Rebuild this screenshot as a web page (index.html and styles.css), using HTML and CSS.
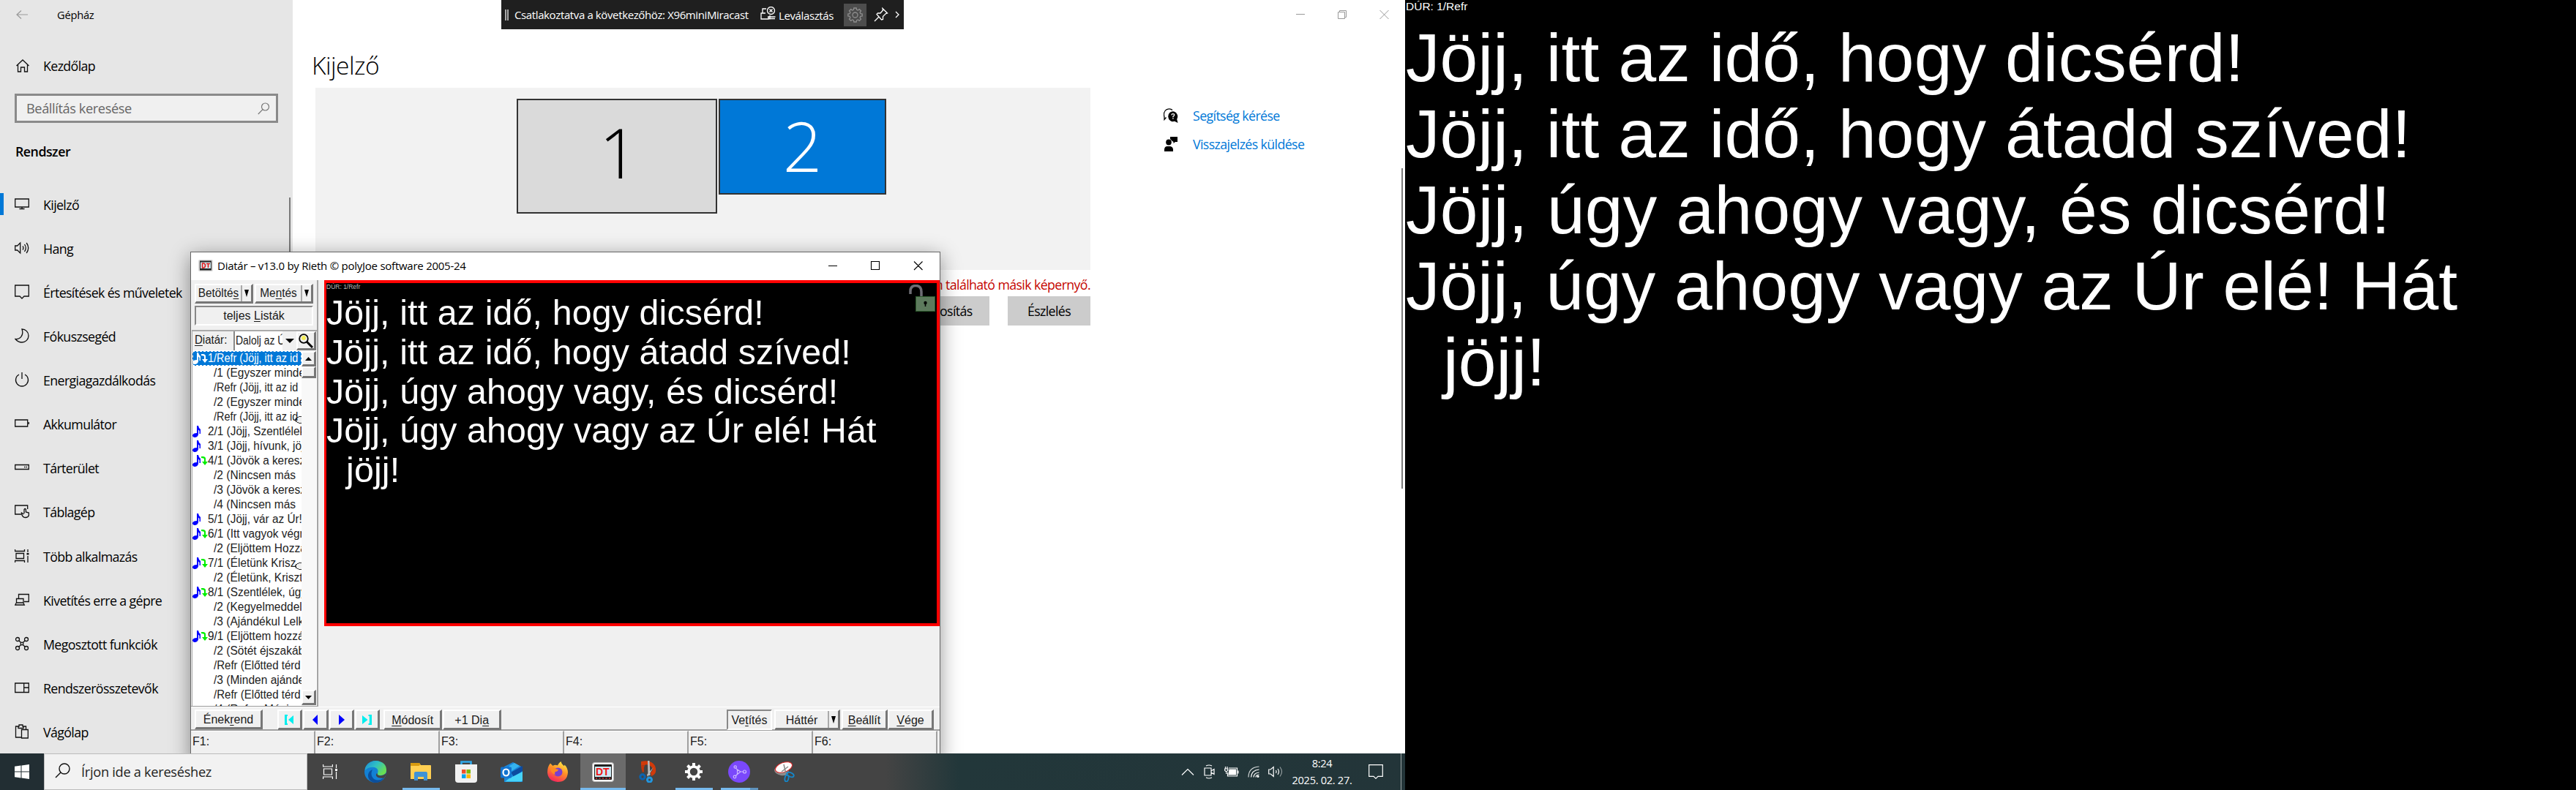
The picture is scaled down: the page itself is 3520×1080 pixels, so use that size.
FILE: index.html
```html
<!DOCTYPE html>
<html lang="hu">
<head>
<meta charset="utf-8">
<title>Gépház – Kijelző</title>
<link rel="stylesheet" href="styles.css">
</head>
<body>
<div class="screens">
<div class="desktop">

  <div class="settings">
    <aside class="sidebar">
      <header class="app-head">
        <svg class="back" width="16" height="12" viewBox="0 0 16 12"><path d="M7 .5 1 6l6 5.500M1 6h15"/></svg>
        <span class="seg small">Gépház</span>
      </header>
      <div class="home">
        <svg class="ico" width="20" height="20" viewBox="0 0 20 20"><path d="M1.500 10 10 2l8.500 8M3.500 8.500V18h4v-6h5v6h4V8.500"/></svg>
        <span class="seg">Kezdőlap</span>
      </div>
      <div class="search">
        <span class="seg">Beállítás keresése</span>
        <svg width="17" height="17" viewBox="0 0 17 17"><circle cx="10.500" cy="6" r="5"/><path d="M7 9.700.8 16"/></svg>
      </div>
      <h2 class="seg">Rendszer</h2>
      <nav>
        <div class="nav-item on"><svg class="ico" viewBox="0 0 20 20"><path d="M.7 3h18.600v11H.7zM10 14v3M6.500 16.500h7"/></svg><span class="seg">Kijelző</span></div>
        <div class="nav-item"><svg class="ico" viewBox="0 0 20 20"><path d="M.7 7h3l4-4v14l-4-4h-3zM11 7.500q1.800 2.500 0 5M13.500 5q3.500 5 0 10M16.200 3q5 7 0 14"/></svg><span class="seg">Hang</span></div>
        <div class="nav-item"><svg class="ico" viewBox="0 0 20 20"><path d="M.7 1h18.600v15H13l-3 3-3-3H.7z"/></svg><span class="seg">Értesítések és műveletek</span></div>
        <div class="nav-item"><svg class="ico" viewBox="0 0 20 20"><path d="M10 1c5 0 9 4 9 9s-4 9-9 9c-4 0-7-2-9-4.500C7 15 13 10 10 1z"/></svg><span class="seg">Fókuszsegéd</span></div>
        <div class="nav-item"><svg class="ico" viewBox="0 0 20 20"><path d="M10 0v9M6 3a8.500 8.500 0 1 0 8 0"/></svg><span class="seg">Energiagazdálkodás</span></div>
        <div class="nav-item"><svg class="ico" viewBox="0 0 20 20"><path d="M.7 5h17v9h-17zM19.300 8v3"/></svg><span class="seg">Akkumulátor</span></div>
        <div class="nav-item"><svg class="ico" viewBox="0 0 20 20"><path d="M.7 6.500h18.600v6H.7zM13 9.500h1.500M15.500 9.500H17"/></svg><span class="seg">Tárterület</span></div>
        <div class="nav-item"><svg class="ico" viewBox="0 0 20 20"><path d="M9 14H.7V2h17v5M13 13V7.500q1.200-2 2.400 0V11l4 1v3.500q-1 3-4.500 3T10 15l-.5-3 3 2"/></svg><span class="seg">Táblagép</span></div>
        <div class="nav-item"><svg class="ico" viewBox="0 0 20 20"><path d="M.5 1v2.500H13.500V1M.5 19v-2.500H13.500V19M2 6.500h10.500v7H2zM18 1v4M18 10v9"/><path d="M16.500 6h3v2.500h-3z" fill="#111" stroke="none"/></svg><span class="seg">Több alkalmazás</span></div>
        <div class="nav-item"><svg class="ico" viewBox="0 0 20 20"><path d="M5.500 8V2.500h13.800v10H13M2.500 8.500h9.500V14H2.500zM2 14.500l-1.200 2.500h12.500l-1.300-2.500"/></svg><span class="seg">Kivetítés erre a gépre</span></div>
        <div class="nav-item"><svg class="ico" viewBox="0 0 20 20"><circle cx="4" cy="4" r="2.500"/><circle cx="16" cy="4" r="2.500"/><circle cx="4" cy="16" r="2.500"/><circle cx="16" cy="16" r="2.500"/><circle cx="10" cy="10" r="1.800"/><path d="m5.800 5.800 3 3m2.400 2.400 3 3m0-8.400-3 3m-2.400 2.400-3 3"/></svg><span class="seg">Megosztott funkciók</span></div>
        <div class="nav-item"><svg class="ico" viewBox="0 0 20 20"><path d="M.7 4h18.600v12.500H.7zM12.700 4v12.500M12.700 10h6.500"/></svg><span class="seg">Rendszerösszetevők</span></div>
        <div class="nav-item"><svg class="ico" viewBox="0 0 20 20"><path d="M9 18H1.500V3H6V1h5v2h4.500v4M5 3v2.500h7V3M9.500 7.500h8.800V19H9.500z"/></svg><span class="seg">Vágólap</span></div>
      </nav>
      <i class="side-scroll"></i>
    </aside>

    <main class="content">
      <div class="win-buttons">
        <svg width="12" height="12" viewBox="0 0 12 12"><path d="M0 5.500h12"/></svg>
        <svg width="12" height="12" viewBox="0 0 12 12"><path d="M.5 2.500h9v9h-9zM2.500 2.500v-2h9v9h-2"/></svg>
        <svg width="13" height="12" viewBox="0 0 13 12"><path d="m.5 0 12 12m0-12-12 12"/></svg>
      </div>
      <h1 class="seg">Kijelző</h1>
      <div class="columns">
        <section class="display-col">
          <div class="arrange">
            <div class="monitor one"><span class="seg">1</span></div>
            <div class="monitor two"><span class="seg">2</span></div>
          </div>
          <p class="warn"><span class="seg">Nem található másik képernyő.</span></p>
          <div class="actions">
            <div class="btn wide"><span class="seg">Azonosítás</span></div>
            <div class="btn"><span class="seg">Észlelés</span></div>
          </div>
        </section>
        <section class="help">
          <div class="help-row">
            <svg width="20" height="20" viewBox="0 0 20 20"><path d="M3.500 12.500 1 15.500V12Q-1 5 4 1.800 9-.5 12 2.500" fill="none" stroke="#000" stroke-width="1.300"/><path d="M19.500 20 15 17.800A6.500 7 0 1 1 18.200 15z"/><path d="M10.900 9.300q.2-1.800 2-1.700T14.600 9.300q0 1-1.700 2v1m0 1v1.500" stroke="#fff" stroke-width="1.400" fill="none"/></svg>
            <span class="seg">Segítség kérése</span>
          </div>
          <div class="help-row">
            <svg width="20" height="20" viewBox="0 0 20 20"><ellipse cx="7" cy="7.500" rx="3.800" ry="4"/><path d="M1 20v-3q.5-4 4-4h4q3.500.5 4 4v3zM9 0h10v7h-3l-2.500 2V7L12 6 9 3z"/></svg>
            <span class="seg">Visszajelzés küldése</span>
          </div>
        </section>
      </div>
      <i class="main-scroll"></i>
    </main>
  </div>

  <div class="miracast">
    <i class="grip"></i>
    <span class="seg m-text">Csatlakoztatva a következőhöz: X96miniMiracast</span>
    <svg class="m-disc" width="21" height="18" viewBox="0 0 21 18"><path d="M8 3H3v6M7 9H1v8h10v-3M10 14h10.500M13 12v5.500M11 16.500h9"/><circle cx="14.500" cy="5.500" r="5"/><path d="m12.500 3.500 4 4m0-4-4 4"/></svg>
    <span class="seg m-btn">Leválasztás</span>
    <span class="m-gear"><svg width="21" height="21" viewBox="0 0 21 21"><path d="M8.800 1h3.400l.4 2.400 1.700.7 2-1.400 2.200 2.200-1.400 2 .7 1.700 2.400.4v3l-2.400.4-.7 1.700 1.400 2-2.200 2.200-2-1.400-1.700.7-.4 2.400H8.800l-.4-2.400-1.700-.7-2 1.400-2.200-2.200 1.400-2-.7-1.700L.8 12V9l2.400-.4.700-1.700-1.400-2 2.200-2.200 2 1.400 1.700-.7z"/><circle cx="10.500" cy="10.500" r="3.500"/></svg></span>
    <svg class="m-pin" width="20" height="20" viewBox="0 0 20 20"><path d="M12 1.500 18.500 8l-2 .5-4 4v4l-2 .5L4 9.500l1.500-1.500h3.500l3.500-4zM7 13l-6 6"/></svg>
    <svg class="m-chev" width="6" height="10" viewBox="0 0 6 10"><path d="m1 1 4 4-4 4"/></svg>
  </div>

  <div class="diatar">
    <div class="titlebar">
      <svg class="dt" width="20" height="16" viewBox="0 0 20 16"><rect width="20" height="16" rx="2" fill="#d8d8d8"/><rect x="2" y="1.500" width="16" height="13" fill="#222"/><rect x="3" y="3.500" width="14" height="8.500" fill="#d4eef5"/><path d="M5.500 5v6h2q2-.5 2-3t-2-3zM11 5.500h5M13.500 5.500V11" fill="none" stroke="#e02020" stroke-width="1.700"/></svg>
      <span class="seg">Diatár – v13.0 by Rieth © polyJoe software 2005-24</span>
      <svg class="controls" width="130" height="13" viewBox="0 0 130 13"><path d="M0 6.500h12M58.500.5h11v11h-11zM117 .5l11.500 11.500m0-11.500L117 12"/></svg>
    </div>
    <div class="body">
      <div class="panel">
        <div class="pair">
          <div class="b3 split"><span class="ms">Betölté<u>s</u></span><i class="arr"></i></div>
          <div class="b3 split"><span class="ms">Me<u>n</u>tés</span><i class="arr"></i></div>
        </div>
        <div class="b3 sunk lists"><span class="ms">teljes <u>L</u>isták</span></div>
        <div class="pick">
          <span class="ms"><u>D</u>iatár:</span>
          <div class="combo"><span class="ms">Dalolj az Ú</span></div>
          <div class="flat"><svg width="12" height="6"><path d="M0 0h12L6 6z"/></svg></div>
          <div class="b3 lens"><svg width="20" height="20" viewBox="0 0 20 20"><path d="m11 11 8 8" stroke="#000" stroke-width="3"/><circle cx="7" cy="7" r="5.800" fill="#eee" stroke="#000" stroke-width="1.800"/><circle cx="7" cy="6" r="3" fill="#f4ee58"/></svg></div>
        </div>
        <div class="list-wrap">
          <div class="list">
            <div class="row sel song link tight"><span class="ms">1/Refr (Jöjj, itt az id</span></div>
            <div class="row"><span class="ms">/1 (Egyszer minde</span></div>
            <div class="row tight"><span class="ms">/Refr (Jöjj, itt az id</span></div>
            <div class="row"><span class="ms">/2 (Egyszer minde</span></div>
            <div class="row more tight"><span class="ms">/Refr (Jöjj, itt az id</span></div>
            <div class="row song"><span class="ms">2/1 (Jöjj, Szentlélek</span></div>
            <div class="row song"><span class="ms">3/1 (Jöjj, hívunk, jöj</span></div>
            <div class="row song link"><span class="ms">4/1 (Jövök a keresz</span></div>
            <div class="row"><span class="ms">/2 (Nincsen más</span></div>
            <div class="row"><span class="ms">/3 (Jövök a keresz</span></div>
            <div class="row"><span class="ms">/4 (Nincsen más</span></div>
            <div class="row song"><span class="ms">5/1 (Jöjj, vár az Úr!</span></div>
            <div class="row song link"><span class="ms">6/1 (Itt vagyok végre</span></div>
            <div class="row"><span class="ms">/2 (Eljöttem Hozzá</span></div>
            <div class="row song link more"><span class="ms">7/1 (Életünk Krisz</span></div>
            <div class="row"><span class="ms">/2 (Életünk, Kriszt</span></div>
            <div class="row song link"><span class="ms">8/1 (Szentlélek, úgy</span></div>
            <div class="row"><span class="ms">/2 (Kegyelmeddel</span></div>
            <div class="row"><span class="ms">/3 (Ajándékul Lelk</span></div>
            <div class="row song link"><span class="ms">9/1 (Eljöttem hozzá</span></div>
            <div class="row"><span class="ms">/2 (Sötét éjszakáb</span></div>
            <div class="row refr"><span class="ms">/Refr (Előtted térd</span></div>
            <div class="row"><span class="ms">/3 (Minden ajánde</span></div>
            <div class="row refr"><span class="ms">/Refr (Előtted térd</span></div>
            <div class="row"><span class="ms">/4 (Refr – Mégis</span></div>
          </div>
          <div class="vbar">
            <div class="b3 sq"><svg width="9" height="5"><path d="M0 5h9L4.500 0z"/></svg></div>
            <div class="b3 thumb"></div>
            <div class="b3 sq last"><svg width="9" height="5"><path d="M0 0h9L4.500 5z"/></svg></div>
          </div>
        </div>
      </div>
      <div class="stage">
        <div class="preview">
          <div class="tag">DÚR: 1/Refr</div>
          <div class="lyrics">
            <div>Jöjj, itt az idő, hogy dicsérd!</div>
            <div>Jöjj, itt az idő, hogy átadd szíved!</div>
            <div>Jöjj, úgy ahogy vagy, és dicsérd!</div>
            <div>Jöjj, úgy ahogy vagy az Úr elé! Hát</div>
            <div class="wrap">jöjj!</div>
          </div>
          <svg class="lock" width="36" height="37" viewBox="0 0 36 37"><path d="M2 13V9q0-7.500 7.500-7.500T17 10v6" fill="none" stroke="#6d6d74" stroke-width="3.500"/><rect x="9.500" y="16.500" width="26" height="20" fill="#5d7a5d" stroke="#2c5a2c"/><circle cx="22.500" cy="25" r="2.200"/><path d="M21.700 25h1.600v5h-1.600z"/></svg>
        </div>
      </div>
    </div>
    <div class="toolbar">
      <div class="b3 t-enek"><span class="ms">Ének<u>r</u>end</span></div>
      <div class="nav-btns">
        <div class="b3"><svg width="13" height="14"><path d="M0 0h4v2H3v10h1v2H0zM12 1v12L5 7z" fill="#0ee"/></svg></div>
        <div class="b3"><svg width="13" height="14"><path d="M10 0v14L3 7z" fill="#00f"/></svg></div>
        <div class="b3"><svg width="13" height="14"><path d="M3 0v14l8-7z" fill="#00f"/></svg></div>
        <div class="b3"><svg width="13" height="14"><path d="M13 0H8.500v2h1.300v10H8.500v2H13zM0 1v12l7.500-6z" fill="#0ee"/></svg></div>
      </div>
      <div class="b3 t-mod"><span class="ms"><u>M</u>ódosít</span></div>
      <div class="b3 t-dia"><span class="ms">+1 Di<u>a</u></span></div>
      <div class="b3 sunk t-vet"><span class="ms">Ve<u>t</u>ítés</span></div>
      <div class="b3 split t-hat"><span class="ms">Háttér</span><i class="arr"></i></div>
      <div class="b3 t-be"><span class="ms"><u>B</u>eállít</span></div>
      <div class="b3 t-vege"><span class="ms"><u>V</u>ége</span></div>
    </div>
    <div class="fkeys">
      <span><b class="ms">F1:</b></span><span><b class="ms">F2:</b></span><span><b class="ms">F3:</b></span><span><b class="ms">F4:</b></span><span><b class="ms">F5:</b></span><span><b class="ms">F6:</b></span>
    </div>
  </div>

  <footer class="taskbar">
    <div class="start"><svg width="20" height="20" viewBox="0 0 20 20"><path d="M0 2.800 8.500 1.600v8H0zM9.500 1.500 20 0v9.600H9.500zM0 10.500h8.500v8L0 17.300zM9.500 10.500H20V20L9.500 18.600z" fill="#fff"/></svg></div>
    <div class="tsearch">
      <svg width="21" height="21" viewBox="0 0 21 21"><circle cx="13" cy="8" r="7"/><path d="M8 13 1 20"/></svg>
      <span class="seg">Írjon ide a kereséshez</span>
    </div>
    <div class="apps">
      <div class="app"><svg width="20" height="20" viewBox="0 0 20 20" fill="none" stroke="#fff" stroke-width="1.200"><path d="M.6 0v3h12.800V0M.6 20v-3h12.800v3M1.500 6h11v8h-11zM18.500 0v5M18.500 10v10"/><path d="M17 6h3v3h-3z" fill="#fff" stroke="none"/></svg></div>
      <div class="app"><svg width="30" height="30" viewBox="0 0 30 30">
        <defs><linearGradient id="e1" x1="0" y1="0" x2="1" y2=".6"><stop offset="0" stop-color="#1b8ad8"/><stop offset=".5" stop-color="#2fc0c4"/><stop offset="1" stop-color="#6be04f"/></linearGradient></defs>
        <circle cx="15" cy="15" r="15" fill="#1380d4"/>
        <path d="M1 10Q5 0 16 0q14 1.500 14 13 0 7-8 7-5 0-4-3 2-6-4-8-8-1-13 4z" fill="url(#e1)"/>
        <path d="M11 12q-4 8 2 13 7 4 14-2-5 8-14 7Q4 27 5 19q1-5 6-7z" fill="#0c4f9c"/>
        <path d="M17.500 17q-.5 3 4.500 3.500 5-.5 8-4 0 4-3 7-9 1-11-3-.5-3 1.500-3.500z" fill="#444"/></svg></div>
      <div class="app open"><svg width="28" height="24" viewBox="0 0 28 24"><path d="M0 1q0-1 1-1h11l2 3h13q1 0 1 1v18H0z" fill="#ffcf52"/><path d="M0 1q0-1 1-1h11l1.500 2-2 2H0z" fill="#d79a10"/><path d="M5 24V14q0-2 2-2h14q2 0 2 2v10h-5v-5h-8v5z" fill="#3f93d6"/></svg></div>
      <div class="app"><svg width="30" height="30" viewBox="0 0 30 30"><path d="M8.500 7V1.500h13V7" fill="none" stroke="#2fa9ea" stroke-width="2.600"/><path d="M0 5h30v21q0 4-4 4H4q-4 0-4-4z" fill="#f1f1f1"/><path d="M9 12h5.500v5.500H9z" fill="#f2502b"/><path d="M15.500 12H21v5.500h-5.500z" fill="#7fba00"/><path d="M9 18.500h5.500V24H9z" fill="#00a4ef"/><path d="M15.500 18.500H21V24h-5.500z" fill="#ffb900"/></svg></div>
      <div class="app"><svg width="30" height="27" viewBox="0 0 30 27"><path d="M5 6 17 0l13 7v20H5z" fill="#1a86d9"/><path d="M12 5 19 1l7 4-14 9z" fill="#35b3ef"/><path d="m14 14 16-9v7L18 20z" fill="#0c4aa0"/><path d="m12 22 18-9v11q0 2.500-2.500 2.500H6z" fill="#46d3f8"/><rect y="6.500" width="15" height="15" rx="1.500" fill="#1273d0"/><ellipse cx="7.500" cy="14" rx="4" ry="4.500" fill="none" stroke="#fff" stroke-width="2.200"/></svg></div>
      <div class="app"><svg width="28" height="28" viewBox="0 0 28 28">
        <defs><linearGradient id="f1" x1=".8" y1="0" x2=".3" y2="1"><stop offset="0" stop-color="#fff04a"/><stop offset=".45" stop-color="#ff9226"/><stop offset="1" stop-color="#f5205f"/></linearGradient></defs>
        <path d="M4 2.500 7.500 6Q10 4 14 5.500 15 2 18.500 0q.5 3.500 4 6 1-.5 1-1.500Q28 9 28 15 27 28 14 28 1 27 0 15 0 7 4 2.500z" fill="url(#f1)"/><circle cx="14.500" cy="14.500" r="6" fill="#7a3fd0"/><path d="M4 9q5-2 7 1l4 1q-1 3-4 3-2 2 0 4-6-1-7-9z" fill="#ff8a22"/></svg></div>
      <div class="app active open"><svg width="30" height="27" viewBox="0 0 30 27"><rect x=".5" y=".5" width="29" height="26" rx="3" fill="#f4f4f4" stroke="#bbb"/><rect x="3" y="3" width="24" height="21" rx="1" fill="#222"/><rect x="4" y="6" width="22" height="14" fill="#cdeaf4"/><path d="M5 22h20" stroke="#d33" stroke-dasharray="2 2.500" stroke-width="1.500"/><text x="5" y="18" class="dt-text">DT</text></svg></div>
      <div class="app"><svg width="26" height="30" viewBox="0 0 26 30"><path d="M3 1q14-3 19 6 4 11-5 14l-1-5q5-3 1-8Q11 4 8 6L3 7z" fill="#d13a0a"/><path d="M3 7 8 6q-2 4-1 9l-2 1Q3 11 3 7z" fill="#c2350a"/><path d="M12 0h2.500l1 20h-3zM20 9l-8 13-1-3z" fill="#bcbcbc"/><circle cx="5" cy="22" r="3.200" fill="none" stroke="#0a63b0" stroke-width="3"/><circle cx="14.500" cy="26" r="3" fill="none" stroke="#2196e0" stroke-width="3"/></svg></div>
      <div class="app open"><svg width="24" height="24" viewBox="0 0 24 24"><circle cx="12" cy="12" r="7" fill="none" stroke="#fff" stroke-width="3.500"/><path d="M12 0v4M12 20v4M0 12h4M20 12h4M3.500 3.500l3 3M17.500 17.500l3 3M20.500 3.500l-3 3M6.500 17.500l-3 3" stroke="#fff" stroke-width="4"/></svg></div>
      <div class="app open multi"><svg width="30" height="30" viewBox="0 0 30 30"><circle cx="15" cy="15" r="15" fill="#7a48fb"/><g fill="none" stroke="#cdb8ff" stroke-width="1.200"><path d="M12.500 12 17 15l-4.500 3.500zM10.500 10l2 2.500M10 21l2.500-2.500M17.500 15h3"/><circle cx="9.700" cy="8.500" r="1.700"/><circle cx="9" cy="22" r="1.800"/><circle cx="22.500" cy="15" r="2"/></g></svg></div>
      <div class="app"><svg width="28" height="28" viewBox="0 0 28 28"><ellipse cx="10" cy="13" rx="10" ry="6" fill="#8d8d8d" transform="rotate(10 10 13)"/><ellipse cx="13" cy="8" rx="12" ry="6.500" fill="#fff" stroke="#d22" transform="rotate(-20 13 8)"/><path d="m13 4 3 13M19 7l-9 7" stroke="#888" stroke-width="1.500"/><g fill="none" stroke="#1488cc" stroke-width="1.800"><ellipse cx="22" cy="18" rx="5" ry="2.700" transform="rotate(25 22 18)"/><ellipse cx="17" cy="23" rx="2.500" ry="4.500" transform="rotate(10 17 23)"/></g></svg></div>
    </div>
    <div class="tray">
      <div><svg width="18" height="10" viewBox="0 0 18 10"><path d="M1 9.500 9 1.500l8 8"/></svg></div>
      <div><svg width="16" height="20" viewBox="0 0 16 20"><path d="M1 5h9v10H1zM10 9l4-2.500v7L10 11M3 2q4-2 8 0M3 18q4 2 8 0"/></svg></div>
      <div><svg width="20" height="15" viewBox="0 0 20 15"><path d="M6 2h11.500v11h-13V8M19 5.500v4M1.500 0v3M4 0v3M.7 3h4v2.500l-2 1.500-2-1.500zM2.700 7v3"/><path d="M7 4h8.500v7H6z" fill="#fff"/></svg></div>
      <div><svg width="16" height="16" viewBox="0 0 16 16"><path d="M1 15.500Q1 2 15.500 1" opacity=".8"/><path d="M4.500 15.500Q5 6 15.500 5M8 15.500Q8.500 9.500 15.500 9M11 15.500q0-3 4.500-3.500"/><circle cx="14" cy="14.500" r="1.500" fill="#fff" stroke="none"/></svg></div>
      <div><svg width="21" height="16" viewBox="0 0 21 16"><path d="M.7 5h2.500l4-3.500v13l-4-3.500H.7zM10.500 6q1.300 2 0 4M13 4q3 4 0 8"/><path d="M16 1.500q5 6.500 0 13" opacity=".5"/></svg></div>
      <div class="clock seg"><span>8:24</span><span>2025. 02. 27.</span></div>
      <div class="notif"><svg width="20" height="20" viewBox="0 0 20 20"><path d="M.7.700h18.600v15.600H13l-3 3-3-3H.7z"/></svg></div>
      <i class="peek"></i>
    </div>
  </footer>
</div>

<div class="projector">
  <div class="ptag">DÚR: 1/Refr</div>
  <div class="lyrics">
    <div>Jöjj, itt az idő, hogy dicsérd!</div>
    <div>Jöjj, itt az idő, hogy átadd szíved!</div>
    <div>Jöjj, úgy ahogy vagy, és dicsérd!</div>
    <div>Jöjj, úgy ahogy vagy az Úr elé! Hát</div>
    <div class="wrap">jöjj!</div>
  </div>
</div>
</div>
</body>
</html>
```
FILE: styles.css
```css
* { box-sizing: border-box; }
html, body { margin: 0; height: 1080px; overflow: hidden; background: #000; }
h1, h2, p { margin: 0; font-weight: 400; }
svg { display: block; flex: none; }
i { font-style: normal; }

.seg { font-family: "Open Sans", "Noto Sans", sans-serif; font-size: 17.8px; white-space: nowrap; color: #000; letter-spacing: -.62px; }
.ms { font-family: "Liberation Sans", Arial, sans-serif; font-size: 16px; font-weight: 400; display: inline-block; transform-origin: 0 50%; white-space: pre; color: #1a1a1a; line-height: 20px; }
.ms u { text-underline-offset: 2px; }

.screens { display: grid; grid-template-columns: 1920px 1600px; height: 1080px; }
.desktop { position: relative; display: flex; flex-direction: column; overflow: hidden; background: #fff; }

/* settings app */
.settings { display: flex; height: 1030px; }
.sidebar { position: relative; width: 400px; background: #e6e6e6; display: flex; flex-direction: column; }
.app-head { display: flex; align-items: center; height: 40px; padding-left: 22px; gap: 40px; }
.app-head .small { font-size: 14.700px; letter-spacing: -.25px; }
.back { fill: none; stroke: #999; stroke-width: 1.200; }
.ico { width: 20px; height: 20px; fill: none; stroke: #111; stroke-width: 1.300; }
.home { display: flex; align-items: center; height: 60px; margin: 22px 0 9px; padding-left: 21px; gap: 18px; }
.search { display: flex; align-items: center; justify-content: space-between; width: 360px; height: 41px; margin: -1px 0 0 20px; padding: 1px 8px 0 13px; border: 3px solid #8a8a8a; background: #f0f0f0; }
.search .seg { color: #666; font-size: 18.2px; letter-spacing: -.4px; }
.search svg { fill: none; stroke: #777; stroke-width: 1.200; }
.sidebar h2 { font-weight: 600; margin: 0 0 0 21px; height: 79px; line-height: 79px; letter-spacing: -.5px; }
.sidebar nav { display: flex; flex-direction: column; padding-top: 1px; }
.nav-item { display: flex; align-items: center; height: 60.100px; padding-left: 20px; gap: 19px; }
.nav-item .seg { padding-top: 2px; }
.nav-item.on { padding-left: 15px; border-left: 5px solid #0078d7; height: 30px; margin: 16px 0 15px; }
.side-scroll { position: absolute; right: 3px; top: 270px; width: 2px; height: 500px; background: #7a7a7a; }

.content { position: relative; flex: 1; }
.win-buttons { display: flex; gap: 45px; padding: 14px 0 0 1371px; height: 71px; }
.win-buttons svg { fill: none; stroke: #999; stroke-width: 1; }
.content h1 { font-weight: 300; font-size: 33.500px; line-height: 36px; height: 49px; padding-left: 26px; letter-spacing: -.5px; }
.columns { display: flex; }
.display-col { width: 1059px; margin-left: 31px; }
.arrange { display: flex; align-items: flex-start; gap: 2px; height: 249px; padding: 15px 0 0 275px; background: #f2f2f2; }
.monitor { border: 2.500px solid #333; display: flex; justify-content: center; align-items: center; }
.monitor .seg { font-weight: 300; font-size: 94px; line-height: 1; letter-spacing: 0; }
.one { width: 274px; height: 157px; background: #dadada; padding: 0 0 11px 5px; }
.two { width: 229px; height: 131px; background: #0078d7; padding-bottom: 3px; }
.two .seg { color: #fff; }
.warn { height: 36px; line-height: 40px; text-align: right; }
.warn .seg { color: #c50500; }
.actions { display: flex; justify-content: flex-end; gap: 25px; }
.btn { width: 113px; height: 40px; background: #ccc; display: flex; align-items: center; justify-content: center; }
.btn.wide { width: 130px; }
.help { margin: 18px 0 0 100px; display: flex; flex-direction: column; }
.help-row { display: flex; align-items: center; gap: 20px; height: 39px; }
.help-row .seg { color: #0078d7; }
.main-scroll { position: absolute; right: 3px; top: 230px; width: 2px; height: 438px; background: #7a7a7a; }

/* miracast strip pinned over the desktop */
.miracast { position: absolute; left: 685px; top: 0; width: 550px; height: 40px; background: #1f1f1f; display: flex; align-items: center; padding-left: 5px; }
.miracast .seg { color: #fff; font-size: 15px; line-height: 20px; letter-spacing: -.38px; }
.miracast svg { fill: none; stroke: #fff; stroke-width: 1.300; }
.grip { width: 5px; height: 15px; border: solid #aaa; border-width: 0 2px; }
.m-text { width: 336px; padding-left: 8px; }
.m-disc { margin: 0 4px 4px 8px; }
.m-btn { width: 89px; margin-top: 2px; }
.m-gear { width: 31px; height: 31px; background: #4d4d4d; display: flex; align-items: center; justify-content: center; }
.miracast .m-gear svg { stroke: #8e8e8e; }
.m-pin { margin-left: 10px; }
.m-chev { margin-left: 9px; }

/* Diatár window */
.diatar { position: absolute; left: 260px; top: 344px; width: 1025px; height: 700px; border: 1px solid #666; background: #f0f0f0; box-shadow: 0 6px 26px rgba(0,0,0,.42); }
.titlebar { display: flex; align-items: center; height: 38px; background: #fff; padding: 0 22px 2px 10px; gap: 6px; }
.titlebar .seg { font-size: 15px; flex: 1; line-height: 20px; letter-spacing: -.25px; }
.controls { fill: none; stroke: #000; stroke-width: 1.100; }
.body { display: flex; height: 583px; }
.b3 { background: #f0f0f0; border: solid; border-width: 2px 3px 3px 2px; border-color: #fff #777 #777 #fff; display: flex; align-items: center; justify-content: center; }
.b3 .ms { transform-origin: 50% 50%; }
.sunk { border-color: #888 #fff #fff #888; border-width: 2px; }
.split { position: relative; justify-content: space-between; }
.arr { width: 14px; align-self: stretch; border-left: 2px solid #aaa; display: flex; align-items: center; justify-content: center; }
.arr::before { content: ""; border: solid transparent; border-width: 10px 3.500px 0; border-top-color: #000; }
.panel { width: 174px; display: flex; flex-direction: column; padding-top: 5px; border-right: 2px solid #a5a5a5; border-bottom: 1px solid #999; }
.pair { display: flex; gap: 2px; padding-left: 5px; }
.pair .b3 { width: 80px; height: 27px; }
.pair .ms { flex: 1; text-align: center; transform: scaleX(.96); }
.lists { width: 162px; height: 27px; margin: 3px 0 6px 5px; }
.pick { display: flex; height: 28px; border-top: 2px solid #aaa; border-left: 1px solid #aaa; margin-left: 1px; padding-left: 3px; align-items: stretch; }
.pick > .ms { width: 53px; line-height: 24px; transform: scaleX(.94); }
.combo { width: 67px; background: #fff; border-left: 2px solid #888; overflow: hidden; padding-left: 1px; }
.combo .ms { line-height: 26px; transform: scaleX(.87); }
.flat { width: 19px; display: flex; align-items: center; justify-content: center; }
.lens { width: 27px; }
.list-wrap { display: flex; flex: 1; overflow: hidden; background: #fff; border-left: 1px solid #aaa; margin-left: 1px; padding-top: 1px; }
.list { width: 149px; overflow: hidden; height: 486px; }
.row { position: relative; height: 20px; padding-left: 29px; overflow: hidden; }
.row .ms { color: #222; transform: scaleX(.97); }
.row.song .ms { transform: scaleX(.96); }
.row.refr .ms { transform: scaleX(.94); }
.row.tight .ms { transform: scaleX(.9); }
.song { padding-left: 20.500px; }
.song::before { content: ""; position: absolute; left: 0; top: 2px; width: 12px; height: 16px; background: #00f; clip-path: path("M6 0h2l1 3 2 2v6h-1.500V7L8 5.500V12q-1 4-5 4-3-.5-3-3 1-3 6-3z"); }
.link::after { content: ""; position: absolute; left: 12px; top: 4px; width: 9px; height: 12px; background: #0e0; clip-path: path("M0 0h3q3 .5 3 3v4h3L5 12 1 7h3V3.500Q3.500 2 0 2z"); }
.sel { background: #0078d7; outline: 1px dashed #fff; outline-offset: -1px; }
.sel::before, .sel::after { background: #fff; }
.sel .ms { color: #fff; }
.more { background: radial-gradient(ellipse 9px 5px at 149px 14px, #f0f0f0 80%, #333 84%, #333 98%, transparent 100%); }
.vbar { width: 20px; display: flex; flex-direction: column; background: #f8f8f8; }
.sq { height: 21px; }
.thumb { height: 16px; }
.last { margin-top: auto; margin-bottom: 1px; }
.stage { flex: 1; padding-left: 8px; }
.preview { position: relative; height: 473px; background: #000; border: 4px solid #f00; border-left-width: 3px; color: #fff; overflow: hidden; font-family: "Liberation Sans", Arial, sans-serif; }
.tag { height: 14px; font-size: 8.500px; line-height: 10px; color: #bbb; }
.preview .lyrics { font-size: 48.300px; line-height: 53.800px; letter-spacing: .15px; }
.preview .wrap { padding-left: 27px; }
.lyrics { white-space: nowrap; }
.lock { position: absolute; right: 2px; top: 2px; }
.toolbar { display: flex; height: 33px; align-items: flex-start; border-top: 1px solid #fff; border-bottom: 2px solid #a0a0a0; padding: 3px 8px 0 5px; }
.toolbar .b3 { height: 28px; }
.toolbar .ms { padding-top: 2px; }
.toolbar .t-enek { width: 93px; height: 27px; }
.nav-btns { display: flex; gap: 1px; margin: 0 5px 0 20px; }
.nav-btns .b3 { width: 34.300px; }
.t-mod { width: 80px; }
.t-dia { width: 80px; margin-left: 1px; }
.t-vet { width: 62px; margin-left: auto; }
.t-hat { width: 90px; margin: 0 2px 0 3px; }
.t-hat .ms { flex: 1; text-align: center; }
.t-be { width: 63px; }
.t-vege { width: 63px; }
.fkeys { display: grid; grid-template-columns: 170px 170px 170px 170px 170px 170px; height: 40px; }
.fkeys span { border-right: 2px solid #a0a0a0; border-top: 1px solid #fff; padding: 4px 0 0 2px; }

/* taskbar */
.taskbar { position: relative; z-index: 2; display: flex; height: 50px; background: linear-gradient(90deg, #222e33 0, #222e33 60px, #444 61px, #444 1210px, #22373a 1310px, #233539 1920px); }
.start { width: 60px; display: flex; align-items: center; justify-content: center; }
.tsearch { width: 360px; background: #f2f2f2; border: 1px solid #bbb; display: flex; align-items: center; padding-left: 14px; gap: 15px; padding-bottom: 3px; }
.tsearch .seg { color: #222; padding-top: 2px; font-size: 18.2px; letter-spacing: -.28px; }
.tsearch svg { fill: none; stroke: #111; stroke-width: 1.400; }
.apps { display: flex; }
.app { position: relative; width: 62.100px; height: 50px; display: flex; align-items: center; justify-content: center; }
.active { background: #6b6b6b; }
.open::after { content: ""; position: absolute; left: 6px; right: 5px; bottom: 0; height: 3px; background: #76b9ed; }
.active::after { left: 0; right: 0; }
.multi::after { right: 5px; background: linear-gradient(90deg, #76b9ed 40px, #5f93bd 40px); }
.dt-text { font: bold 14px "Liberation Sans", Arial, sans-serif; fill: #f01818; }
.tray { margin-left: auto; display: flex; }
.tray > div { width: 30px; display: flex; align-items: center; justify-content: center; }
.tray svg { fill: none; stroke: #fff; stroke-width: 1.200; }
.tray > .clock { width: 97px; flex-direction: column; color: #fff; font-size: 14.600px; line-height: 23px; letter-spacing: -.3px; padding-bottom: 1px; }
.tray > .notif { width: 50px; }
.peek { margin-left: 9px; width: 6px; border-left: 1px solid #9aa5a5; }

/* projected screen */
.projector { background: #000; color: #fff; padding-left: 1px; font-family: "Liberation Sans", Arial, sans-serif; overflow: hidden; }
.ptag { height: 27px; font-size: 15.500px; line-height: 18px; }
.projector .lyrics { font-size: 93px; line-height: 104px; letter-spacing: .1px; }
.projector .lyrics div:nth-child(3) { letter-spacing: .25px; }
.projector .lyrics div:nth-child(4) { letter-spacing: 0; }
.projector .wrap { padding-left: 51px; }
```
